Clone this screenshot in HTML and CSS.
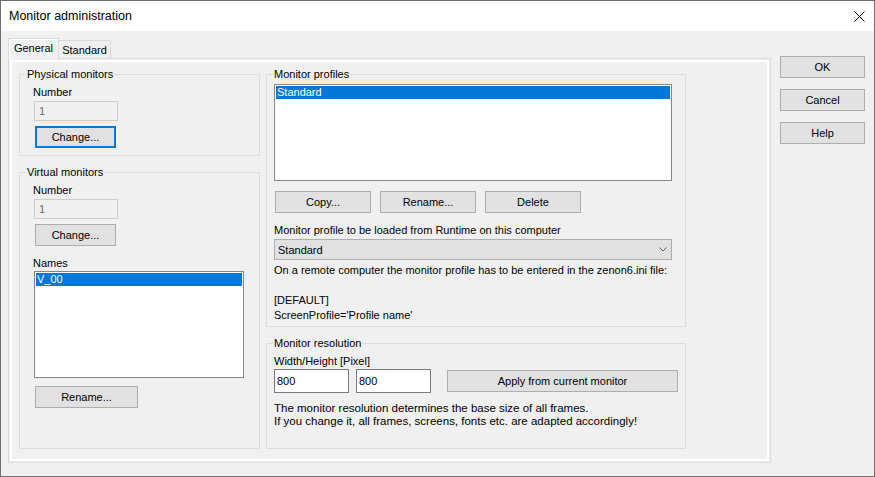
FILE: index.html
```html
<!DOCTYPE html>
<html>
<head>
<meta charset="utf-8">
<title>Monitor administration</title>
<link rel="stylesheet" href="styles.css">
</head>
<body>
<div class="window">
  <div class="titlebar">
    <span class="title">Monitor administration</span>
    <svg class="close" width="11" height="11" viewBox="0 0 11 11"><path d="M0.5 0.5L10.5 10.5M10.5 0.5L0.5 10.5" stroke="#000" stroke-width="1" fill="none"/></svg>
  </div>
  <div class="client">
    <div class="tabctl">
      <div class="tabstrip">
        <div class="tab active">General</div>
        <div class="tab">Standard</div>
      </div>
      <div class="pane">
        <div class="col col-left">
          <div class="group g-phys">
            <span class="legend">Physical monitors</span>
            <div class="lbl">Number</div>
            <div class="edit disabled">1</div>
            <div class="btn btn-change focused">Change...</div>
          </div>
          <div class="group g-virt">
            <span class="legend">Virtual monitors</span>
            <div class="lbl">Number</div>
            <div class="edit disabled">1</div>
            <div class="btn btn-change">Change...</div>
            <div class="lbl lbl-names">Names</div>
            <div class="listbox lb-names"><div class="item sel">V_00</div></div>
            <div class="btn btn-rename">Rename...</div>
          </div>
        </div>
        <div class="col col-right">
          <div class="group g-prof">
            <span class="legend">Monitor profiles</span>
            <div class="listbox lb-prof"><div class="item sel">Standard</div></div>
            <div class="btnrow">
              <div class="btn">Copy...</div>
              <div class="btn">Rename...</div>
              <div class="btn">Delete</div>
            </div>
            <div class="lbl lbl-load">Monitor profile to be loaded from Runtime on this computer</div>
            <div class="combo"><span>Standard</span><svg class="chev" width="8" height="5" viewBox="0 0 8 5"><path d="M0.5 0.5L4 4L7.5 0.5" stroke="#5a5a5a" stroke-width="1" fill="none"/></svg></div>
            <div class="note">On a remote computer the monitor profile has to be entered in the zenon6.ini file:<br><br>[DEFAULT]<br>ScreenProfile='Profile name'</div>
          </div>
          <div class="group g-res">
            <span class="legend">Monitor resolution</span>
            <div class="lbl">Width/Height [Pixel]</div>
            <div class="resrow">
              <div class="edit res">800</div>
              <div class="edit res res2">800</div>
              <div class="btn btn-apply">Apply from current monitor</div>
            </div>
            <div class="note2">The monitor resolution determines the base size of all frames.<br>If you change it, all frames, screens, fonts etc. are adapted accordingly!</div>
          </div>
        </div>
      </div>
    </div>
    <div class="side">
      <div class="btn">OK</div>
      <div class="btn">Cancel</div>
      <div class="btn">Help</div>
    </div>
  </div>
</div>
</body>
</html>
```

FILE: styles.css
```css
* { box-sizing: border-box; }
html, body { margin: 0; padding: 0; }
body {
  font-family: "Liberation Sans", Arial, sans-serif;
  font-size: 11px;
  color: #000;
  width: 875px;
  height: 477px;
  overflow: hidden;
  background: #f0f0f0;
}
.window {
  width: 875px;
  height: 477px;
  border: 1px solid #6f6f6f;
  display: flex;
  flex-direction: column;
  background: #f0f0f0;
}
.titlebar {
  height: 30px;
  flex: none;
  background: #fff;
  display: flex;
  align-items: center;
  justify-content: space-between;
  padding: 0 9px 0 8px;
}
.title { font-size: 12.5px; }
.close { display: block; }

.client {
  flex: 1;
  display: flex;
  padding: 7px 0 0 7px;
}
.tabctl {
  width: 763px;
  display: flex;
  flex-direction: column;
}
.tabstrip {
  height: 20px;
  display: flex;
  align-items: flex-end;
  position: relative;
  z-index: 2;
}
.tab {
  border: 1px solid #d9d9d9;
  border-bottom: none;
  background: #f0f0f0;
  text-align: center;
}
.tab.active {
  width: 51px;
  height: 22px;
  margin-bottom: -2px;
  line-height: 18px;
  background: #f0f0f0;
  box-shadow: inset 1px 1px 0 #fff;
}
.tab + .tab {
  width: 53px;
  height: 18px;
  margin-left: -1px;
  line-height: 18px;
}
.pane {
  height: 405px;
  border: 1px solid #d9d9d9;
  box-shadow: inset 0 0 0 1px #f0f0f0, inset 0 0 0 3px #fff;
  display: flex;
  padding: 15px 0 0 10px;
}
.col { display: flex; flex-direction: column; }
.col-left { width: 241px; gap: 16px; }
.col-right { width: 420px; margin-left: 6px; gap: 16px; }

.group {
  position: relative;
  border: 1px solid #dcdcdc;
  display: flex;
  flex-direction: column;
  align-items: flex-start;
}
.legend {
  position: absolute;
  top: -8px;
  left: 6px;
  padding: 0 1px;
  background: #f0f0f0;
  line-height: 15px;
}
.lbl { line-height: 16px; }

.btn {
  height: 22px;
  background: #e1e1e1;
  border: 1px solid #adadad;
  display: flex;
  align-items: center;
  justify-content: center;
  flex: none;
}
.btn.focused { border: 2px solid #0078d7; }

.edit {
  height: 20px;
  width: 84px;
  margin-left: 1px;
  margin-top: 1px;
  border: 1px solid #7a7a7a;
  background: #fff;
  padding-left: 4px;
  line-height: 18px;
}
.edit.disabled {
  border-color: #cccccc;
  background: #f0f0f0;
  color: #6d6d6d;
}

.listbox {
  border: 1px solid #828790;
  background: #fff;
  padding: 1px;
}
.item { height: 13px; line-height: 13px; padding-left: 1px; }
.item.sel { background: #0078d7; color: #fff; }

.g-phys { height: 82px; padding: 9px 0 0 13px; }
.g-virt { height: 277px; padding: 9px 0 0 13px; }
.btn-change { width: 81px; margin-left: 2px; margin-top: 5px; }
.lbl-names { margin-top: 9px; }
.lb-names { width: 210px; height: 107px; margin-left: 1px; }
.btn-rename { width: 103px; margin-left: 2px; margin-top: 8px; }

.g-prof { height: 253px; padding: 9px 0 0 7px; }
.lb-prof { width: 398px; height: 97px; }
.btnrow { display: flex; gap: 9px; margin-top: 10px; margin-left: 1px; }
.btnrow .btn { width: 96px; }
.lbl-load { margin-top: 9px; }
.combo {
  width: 398px;
  height: 21px;
  margin-top: 1px;
  border: 1px solid #adadad;
  background: #e1e1e1;
  display: flex;
  align-items: center;
  justify-content: space-between;
  padding: 0 4px 0 3px;
}
.chev { display: block; }
.note { margin-top: 3px; line-height: 15px; }

.g-res { height: 106px; padding: 9px 0 0 7px; }
.resrow { display: flex; align-items: center; }
.edit.res { width: 75px; height: 24px; margin: 0; padding-left: 2px; line-height: 22px; }
.edit.res2 { margin-left: 7px; }
.btn-apply { width: 231px; margin-left: 16px; }
.note2 {
  margin-top: 9px;
  font-size: 11.5px;
  line-height: 13px;
}

.side {
  width: 85px;
  margin-left: 9px;
  padding-top: 18px;
  display: flex;
  flex-direction: column;
  gap: 11px;
}
.side .btn { width: 85px; }
```
